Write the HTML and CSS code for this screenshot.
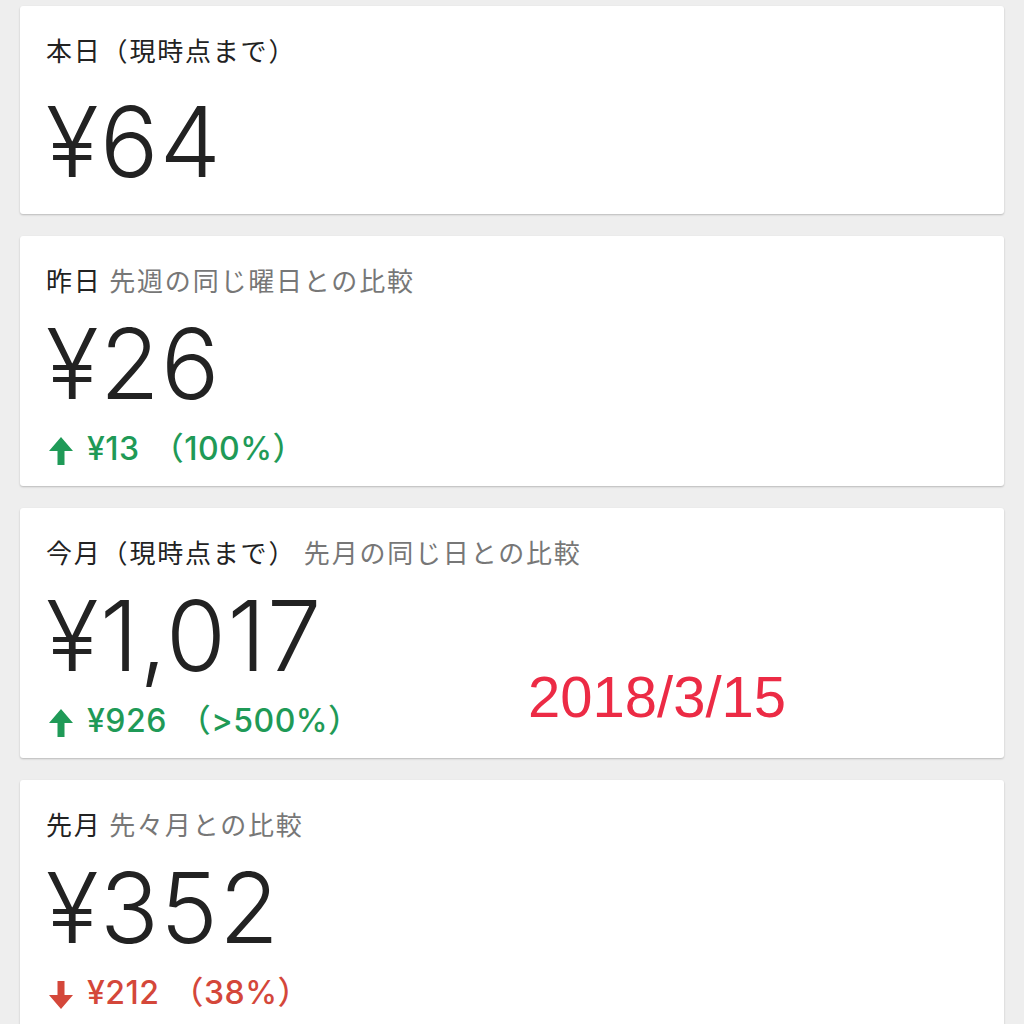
FILE: index.html
```html
<!DOCTYPE html>
<html lang="ja">
<head>
<meta charset="utf-8">
<link rel="stylesheet" href="styles.css">
</head>
<body>
<main class="list">
  <section class="card card-today">
    <div class="label">本日（現時点まで）</div>
    <div class="amount">¥64</div>
  </section>

  <section class="card">
    <div class="label">昨日 <span class="sub">先週の同じ曜日との比較</span></div>
    <div class="amount">¥26</div>
    <div class="delta up">
      <svg class="arrow" viewBox="0 0 24 28" width="24" height="28"><polygon points="12,0 24,14 15.5,14 15.5,28 8.5,28 8.5,14 0,14"/></svg>
      <span>¥13</span><span class="pct">（100%）</span>
    </div>
  </section>

  <section class="card">
    <div class="label">今月（現時点まで） <span class="sub">先月の同じ日との比較</span></div>
    <div class="amount">¥1,017</div>
    <div class="delta up">
      <svg class="arrow" viewBox="0 0 24 28" width="24" height="28"><polygon points="12,0 24,14 15.5,14 15.5,28 8.5,28 8.5,14 0,14"/></svg>
      <span>¥926</span><span class="pct">（&gt;500%）</span>
    </div>
    <div class="stamp">2018/3/15</div>
  </section>

  <section class="card">
    <div class="label">先月 <span class="sub">先々月との比較</span></div>
    <div class="amount">¥352</div>
    <div class="delta down">
      <svg class="arrow" viewBox="0 0 24 28" width="24" height="28"><polygon points="12,28 24,14 15.5,14 15.5,0 8.5,0 8.5,14 0,14"/></svg>
      <span>¥212</span><span class="pct">（38%）</span>
    </div>
  </section>
</main>
</body>
</html>
```

FILE: styles.css
```css
html, body {
  margin: 0;
  padding: 0;
  background: #eeeeee;
}

body {
  font-family: Inter, "Noto Sans CJK JP", sans-serif;
}

.list {
  display: flex;
  flex-direction: column;
  gap: 22px;
  padding: 6px 20px 0 20px;
}

.card {
  position: relative;
  background: #ffffff;
  border-radius: 3px;
  box-shadow: 0 1px 2px rgba(0, 0, 0, 0.22);
  padding: 29px 26px 20px 26px;
}

.label {
  font-family: "Noto Sans CJK JP", sans-serif;
  font-size: 26px;
  line-height: 30px;
  letter-spacing: 1.8px;
  color: #222222;
  white-space: nowrap;
}

.label .sub {
  color: #777777;
}

.amount {
  font-family: Inter, "Noto Sans CJK JP", sans-serif;
  font-weight: 300;
  font-size: 97px;
  line-height: 100px;
  letter-spacing: 1.5px;
  color: #222222;
  margin-top: 19px;
}

.card-today .amount {
  margin-top: 27px;
  margin-bottom: 2px;
}

.delta {
  display: flex;
  align-items: center;
  margin-top: 18px;
  height: 34px;
  font-family: Inter, "Noto Sans CJK JP", sans-serif;
  font-size: 32px;
  font-weight: 500;
  line-height: 34px;
  letter-spacing: 0.5px;
  padding-left: 3px;
  white-space: nowrap;
}

.delta .arrow {
  flex: none;
  margin-top: 4px;
  margin-right: 14px;
}

.delta .pct {
  margin-left: 12px;
}

.delta.up {
  color: #1f9a57;
}

.delta.up .arrow {
  fill: #1f9a57;
}

.delta.down {
  color: #d4473a;
}

.delta.down .arrow {
  fill: #d4473a;
}

.stamp {
  position: absolute;
  left: 508px;
  top: 156px;
  font-family: "Liberation Sans", Arial, sans-serif;
  font-size: 58px;
  line-height: 66px;
  color: #ec2b45;
}
```
